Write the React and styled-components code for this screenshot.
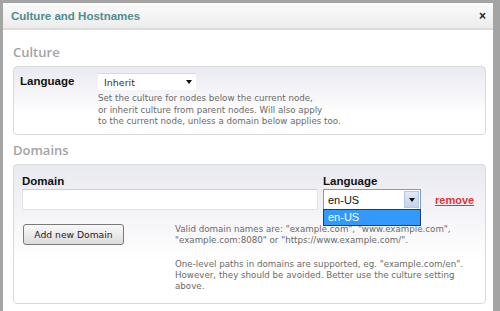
import React from "react";
import styled, { createGlobalStyle } from "styled-components";

const Global = createGlobalStyle`
	html, body {
		margin: 0;
		padding: 0;
	}
	body {
		font-family: "DejaVu Sans", Verdana, sans-serif;
	}
`;

const Frame = styled.div`
	width: 500px;
	height: 311px;
	box-sizing: border-box;
	background: #a4a4a4;
	padding: 3px 7px 0 3px;
	overflow: hidden;
`;

const Dialog = styled.div`
	height: 100%;
	background: #fff;
	display: flex;
	flex-direction: column;
`;

const Header = styled.div`
	height: 24px;
	flex: none;
	display: flex;
	align-items: center;
	justify-content: space-between;
	padding: 1px 7px 0 8px;
	background: linear-gradient(#fbfbfb, #ececec);
	border-bottom: 2px solid #dcdcdc;
`;

const Title = styled.div`
	font-family: "Liberation Sans", Arial, sans-serif;
	font-weight: bold;
	font-size: 11.5px;
	color: #4f8d8f;
`;

const Close = styled.div`
	font-family: "Liberation Sans", Arial, sans-serif;
	font-weight: bold;
	font-size: 12px;
	color: #222;
	line-height: 1;
`;

const Body = styled.div`
	padding: 0 7px 0 10px;
`;

const Heading = styled.div`
	font-family: "Open Sans", sans-serif;
	font-weight: 600;
	font-size: 13px;
	color: #a3a3a3;
	margin: ${({ top }) => top}px 0 5px;
	line-height: 17px;
`;

const Panel = styled.div`
	box-sizing: border-box;
	height: ${({ h }) => h}px;
	border: 1px solid #dadada;
	border-radius: 4px;
	background: linear-gradient(#e9e9f1, #ffffff 70%);
	padding: ${({ pad }) => pad};
`;

const Row = styled.div`
	display: flex;
`;

const Label = styled.div`
	font-family: "Liberation Sans", Arial, sans-serif;
	font-weight: bold;
	font-size: 11.5px;
	color: #111;
	width: ${({ w }) => (w ? `${w}px` : "auto")};
	flex: none;
	line-height: 16px;
`;

const Field = styled.div`
	display: flex;
	flex-direction: column;
`;

const Select = styled.div`
	box-sizing: border-box;
	width: 98px;
	height: 17px;
	background: #fff;
	border-top: 1px solid #d8d8d8;
	display: flex;
	align-items: center;
	justify-content: space-between;
	padding: 0 4px 0 6px;
	font-size: 9.5px;
	color: #333;
`;

const Caret = styled.span`
	width: 0;
	height: 0;
	border-left: 3.5px solid transparent;
	border-right: 3.5px solid transparent;
	border-top: 4px solid #111;
`;

const Help = styled.div`
	font-size: 8.7px;
	line-height: ${({ lh }) => lh || 11}px;
	color: #6a6a6a;
	margin-top: ${({ top }) => top || 0}px;
	width: ${({ w }) => w}px;
	white-space: nowrap;
`;

const DomainGrid = styled.div`
	display: grid;
	grid-template-columns: 301px 111px auto;
	grid-template-rows: 17px 21px;
	align-items: end;
`;

const TextInput = styled.div`
	box-sizing: border-box;
	width: 296px;
	height: 21px;
	background: #fff;
	border: 1px solid #e2e2e2;
	border-top-color: #cfcfcf;
	border-radius: 2px;
`;

const Combo = styled.div`
	position: relative;
	box-sizing: border-box;
	width: 98px;
	height: 21px;
	background: #fff;
	border: 1px solid #7f9db9;
	display: flex;
	align-items: center;
	font-family: "Liberation Sans", Arial, sans-serif;
	font-size: 11px;
	color: #111;
	padding-left: 4px;
`;

const ComboButton = styled.div`
	position: absolute;
	right: 1px;
	top: 1px;
	bottom: 1px;
	width: 15px;
	background: linear-gradient(#dfe9f7, #c3d3ee);
	border: 1px solid #b6c7e6;
	box-sizing: border-box;
	display: flex;
	align-items: center;
	justify-content: center;
`;

const Options = styled.div`
	position: absolute;
	left: -1px;
	top: 19px;
	width: 98px;
	height: 17px;
	box-sizing: border-box;
	background: #3399ff;
	border: 1px solid #1e3f6f;
	color: #fff;
	font-family: "Liberation Sans", Arial, sans-serif;
	font-size: 11px;
	padding-left: 4px;
	line-height: 15px;
	z-index: 2;
`;

const Remove = styled.a`
	font-family: "Liberation Sans", Arial, sans-serif;
	font-weight: bold;
	font-size: 11px;
	color: #e0343a;
	text-decoration: underline;
	align-self: center;
	padding-left: 1px;
`;

const Bottom = styled.div`
	display: flex;
	margin-top: 14px;
`;

const Button = styled.button`
	box-sizing: border-box;
	width: 101px;
	height: 21px;
	flex: none;
	margin: 0 51px 0 1px;
	border: 1px solid #7a7a7a;
	border-radius: 3px;
	background: linear-gradient(#fafafa, #dcdcdc);
	font-family: "DejaVu Sans", Verdana, sans-serif;
	font-size: 9.2px;
	color: #222;
	padding: 0;
`;

const App = () => (
	<>
		<Global />
		<Frame>
			<Dialog>
				<Header>
					<Title>Culture and Hostnames</Title>
					<Close>×</Close>
				</Header>
				<Body>
					<Heading top={14}>Culture</Heading>
					<Panel h={69} pad="6px 6px 0 6px">
						<Row>
							<Label w={78}>Language</Label>
							<Field>
								<Select>
									Inherit
									<Caret />
								</Select>
								<Help top={3} w={260} lh={11.5}>
									Set the culture for nodes below the current node,
									<br />
									or inherit culture from parent nodes. Will also apply
									<br />
									to the current node, unless a domain below applies too.
								</Help>
							</Field>
						</Row>
					</Panel>
					<Heading top={7}>Domains</Heading>
					<Panel h={140} pad="7px 8px 0 8px">
						<DomainGrid>
							<Label>Domain</Label>
							<Label>Language</Label>
							<span />
							<TextInput />
							<Combo>
								en-US
								<ComboButton>
									<Caret />
								</ComboButton>
								<Options>en-US</Options>
							</Combo>
							<Remove>remove</Remove>
						</DomainGrid>
						<Bottom>
							<Button>Add new Domain</Button>
							<Field>
								<Help w={300}>
									Valid domain names are: "example.com", "www.example.com",
									<br />
									"example.com:8080" or "https://www.example.com/".
								</Help>
								<Help top={13} w={300}>
									One-level paths in domains are supported, eg. "example.com/en".
									<br />
									However, they should be avoided. Better use the culture setting
									<br />
									above.
								</Help>
							</Field>
						</Bottom>
					</Panel>
				</Body>
			</Dialog>
		</Frame>
	</>
);

export default App;
